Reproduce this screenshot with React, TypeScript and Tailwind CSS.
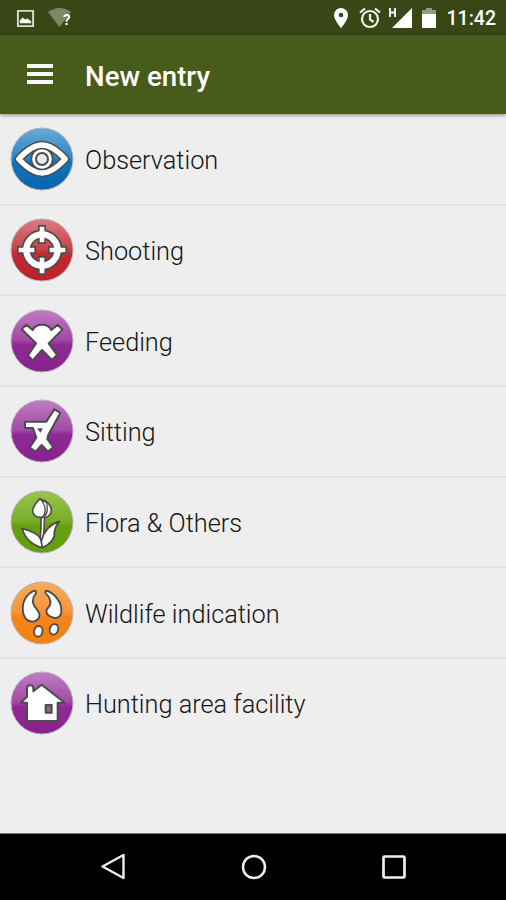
import type { ReactNode } from "react";

type Tone = "blue" | "red" | "purple" | "green" | "orange";

const tones: Record<Tone, [string, string, string, string]> = {
  blue: ["#69aad6", "#2f85c5", "#1273bb", "#0765b0"],
  red: ["#dc7c82", "#c9424a", "#c22a34", "#c01e2a"],
  purple: ["#c07cc4", "#a24aa6", "#8f2a94", "#8b1f90"],
  green: ["#98c450", "#78ae28", "#66a010", "#62a008"],
  orange: ["#f8ab5e", "#f79436", "#f5851a", "#f5810c"],
};

const line = "#4b4b4b";

// Every glyph is drawn around 0,0 in a 192 unit box
const Eye = () => (
  <>
    <path
      d="M-70 0C-44 -28 -22 -42 0 -42S44 -28 70 0C44 28 22 42 0 42S-44 28 -70 0Z"
      fill="none"
      stroke={line}
      strokeWidth="25"
      strokeLinejoin="round"
    />
    <circle r="32" fill="#fff" stroke={line} strokeWidth="5" />
    <path
      d="M-70 0C-44 -28 -22 -42 0 -42S44 -28 70 0C44 28 22 42 0 42S-44 28 -70 0Z"
      fill="none"
      stroke="#fff"
      strokeWidth="16"
      strokeLinejoin="round"
    />
    <circle r="18" fill="#e3e8ec" stroke={line} strokeWidth="6" />
  </>
);

const Crosshair = () => (
  <>
    <g fill="none" stroke={line}>
      <circle r="47" strokeWidth="29" />
      <path d="M0 -75V-18M0 18V75M-75 0H-18M18 0H75" strokeWidth="24" />
    </g>
    <g fill="none" stroke="#fff">
      <circle r="47" strokeWidth="19" />
      <path d="M0 -70V-23M0 23V70M-70 0H-23M23 0H70" strokeWidth="14" />
    </g>
  </>
);

const Feeder = () => (
  <path
    d="M-47 -49L-28 -33C-18 -54 18 -54 28 -33L47 -49L61 -34L20 7L45 42L30 57L0 27L-28 58L-42 43L-18 7L-61 -35Z"
    fill="#fff"
    stroke={line}
    strokeWidth="6"
    strokeLinejoin="round"
  />
);

const Seat = () => (
  <g strokeLinejoin="round">
    <path
      d="M-51 -28H13L37 -65L55 -54L19 11L16 24L34 49L18 61L-1 42L-19 62L-37 50L-17 20L-27 -9H-51Z"
      fill="#fff"
      stroke={line}
      strokeWidth="6"
    />
    <path d="M-13 -7H1L-5 4Z" fill={line} stroke={line} strokeWidth="2" />
  </g>
);

const Tulip = () => (
  <g fill="#fff" stroke={line} strokeWidth="5" strokeLinejoin="round">
    <path d="M-3 -17L8 -18Q7 18 3 62H-7Q-1 22 -3 -17Z" />
    <path d="M-60 19C-36 26 -7 35 -2 58L1 77C-28 70 -50 53 -60 19Z" />
    <path d="M52 -2C33 4 8 17 -2 57L1 77C25 65 40 48 37 31Q40 12 52 -2Z" />
    <path d="M-1 -67C15 -64 29 -48 28 -34C28 -21 16 -12 2 -14C-18 -12 -28 -21 -28 -34C-26 -49 -14 -62 -6 -70Z" />
    <path d="M-4 -68C13 -48 13 -25 1 -15M3 -63Q18 -62 15 -44Q19 -28 7 -17" fill="none" strokeWidth="4" />
  </g>
);

const Track = () => (
  <g fill="#fff" stroke={line} strokeWidth="5.5">
    <path d="M-23 -67C-47 -57 -61 -33 -57 -5C-54 22 -33 31 -18 23C-3 15 -6 0 -15 -10C-29 -25 -32 -42 -19 -58Q-16 -67 -23 -67Z" />
    <path d="M15 -67C40 -57 60 -30 58 -5C57 16 38 19 24 10C9 1 11 -9 20 -18C31 -31 24 -48 11 -59Q8 -66 15 -67Z" />
    <ellipse cx="-11" cy="55" rx="12.500" ry="16" transform="rotate(12 -11 55)" />
    <ellipse cx="36" cy="49" rx="12.500" ry="16" transform="rotate(18 36 49)" />
  </g>
);

const House = () => (
  <g strokeLinejoin="round" stroke={line} strokeWidth="6">
    <path
      d="M-64 -1L-45 -19V-46Q-44 -53 -36 -53Q-27 -53 -26 -46V-35L-1 -55L68 -1H47V54H-45V-1Z"
      fill="#fff"
    />
    <path d="M11 6H29V29H11Z" fill="#8e638f" />
  </g>
);

const entries: { label: string; tone: Tone; glyph: ReactNode }[] = [
  { label: "Observation", tone: "blue", glyph: <Eye /> },
  { label: "Shooting", tone: "red", glyph: <Crosshair /> },
  { label: "Feeding", tone: "purple", glyph: <Feeder /> },
  { label: "Sitting", tone: "purple", glyph: <Seat /> },
  { label: "Flora & Others", tone: "green", glyph: <Tulip /> },
  { label: "Wildlife indication", tone: "orange", glyph: <Track /> },
  { label: "Hunting area facility", tone: "purple", glyph: <House /> },
];

function Badge({ tone, children }: { tone: Tone; children: ReactNode }) {
  const [top, mid, low, bottom] = tones[tone];
  return (
    <svg viewBox="-96 -96 192 192" className="size-16 shrink-0">
      <defs>
        <linearGradient id={tone} x1="0" y1="0" x2="0" y2="1">
          <stop offset="0" stopColor={top} />
          <stop offset="0.48" stopColor={mid} />
          <stop offset="0.56" stopColor={low} />
          <stop offset="1" stopColor={bottom} />
        </linearGradient>
      </defs>
      <circle r="93" fill={`url(#${tone})`} stroke="#b4b4b8" strokeWidth="3" />
      {children}
    </svg>
  );
}

function StatusBar() {
  return (
    <div className="flex h-[35px] items-center bg-[#394615] pl-4 pr-[10px] pt-px text-white">
      <svg viewBox="0 0 20 20" className="size-[19px]">
        <path d="M2 2H18V18H2Z" fill="none" stroke="#d9dcd2" strokeWidth="2" />
        <path d="M4 15V12L7 9L9.500 11L12 10L16 13V15Z" fill="#fff" />
      </svg>
      <div className="relative ml-[13px] h-5 w-6">
        <svg viewBox="0 0 24 20" className="h-5 w-6">
          <path d="M0 4Q11.500 -4 23 4L11.500 19Z" fill="#7c8764" />
        </svg>
        <span className="absolute left-[15px] top-[3px] text-[15px] font-bold leading-[18px]">?</span>
      </div>
      <div className="ml-auto flex items-center">
        <svg viewBox="0 0 16 22" className="h-[22px] w-4">
          <path d="M8 1A7 7 0 0 0 1 8C1 13 8 21 8 21S15 13 15 8A7 7 0 0 0 8 1Z" fill="#fff" />
          <circle cx="8" cy="8" r="2.300" fill="#394615" />
        </svg>
        <svg viewBox="0 0 22 22" className="ml-[10px] size-[22px]" fill="none" stroke="#f2f3ee" strokeWidth="2.200">
          <circle cx="11" cy="12" r="8" />
          <path d="M11 7V12.500L14.500 15M1 5.500L6 1.500M21 5.500L16 1.500" />
        </svg>
        <svg viewBox="0 0 24 22" className="ml-2 h-[22px] w-6">
          <path d="M23 1V21H3Z" fill="#fff" />
          <path d="M1 1V10M6 1V10M1 5.500H6" stroke="#fff" strokeWidth="1.800" />
        </svg>
        <svg viewBox="0 0 14 22" className="ml-[9px] h-[22px] w-[14px]">
          <path d="M0 8V3H4V1H10V3H14V8Z" fill="#929b7c" />
          <path d="M0 7H14V21H0Z" fill="#fff" />
        </svg>
        <span className="ml-[11px] mt-0.5 text-[19.500px] font-medium leading-none">11:42</span>
      </div>
    </div>
  );
}

function Toolbar() {
  return (
    <header className="relative z-10 flex h-[79px] items-center bg-[#475b1b] pl-[27px] shadow-[0_1px_4px_rgba(0,0,0,0.45)]">
      <div className="-mt-px flex w-[26px] flex-col gap-1">
        <span className="h-1 bg-[#f6f7f4]" />
        <span className="h-1 bg-[#f6f7f4]" />
        <span className="h-1 bg-[#f6f7f4]" />
      </div>
      <h1 className="ml-8 mt-[5px] text-[27.700px] font-medium leading-none text-white">New entry</h1>
    </header>
  );
}

function NavBar() {
  return (
    <nav className="flex h-[67px] items-center justify-between border-t border-[#777] bg-black pl-[99px] pr-[98px]">
      <svg viewBox="0 0 28 28" className="size-7" fill="none" stroke="#eee" strokeWidth="2.400">
        <path d="M24.500 2V25L3.500 13.500Z" strokeLinejoin="round" />
      </svg>
      <svg viewBox="0 0 28 28" className="size-7" fill="none" stroke="#eee" strokeWidth="2.500">
        <circle cx="14" cy="14" r="11" />
      </svg>
      <svg viewBox="0 0 28 28" className="size-7" fill="none" stroke="#eee" strokeWidth="2.700">
        <rect x="3.500" y="3.500" width="21" height="21" rx="1" />
      </svg>
    </nav>
  );
}

export default function App() {
  return (
    <div className="flex h-[900px] w-[506px] flex-col overflow-hidden bg-[#eeeeee] font-[Roboto,sans-serif]">
      <StatusBar />
      <Toolbar />
      <ul className="flex-1 pt-px">
        {entries.map((entry) => (
          <li
            key={entry.label}
            className="flex h-[90.700px] items-center border-b-2 border-[#e2e2e2] pl-[10px] last:border-transparent"
          >
            <Badge tone={entry.tone}>{entry.glyph}</Badge>
            <span className="ml-[11px] mt-[3px] text-[25.300px] font-light leading-none text-[#151515]">
              {entry.label}
            </span>
          </li>
        ))}
      </ul>
      <NavBar />
    </div>
  );
}
